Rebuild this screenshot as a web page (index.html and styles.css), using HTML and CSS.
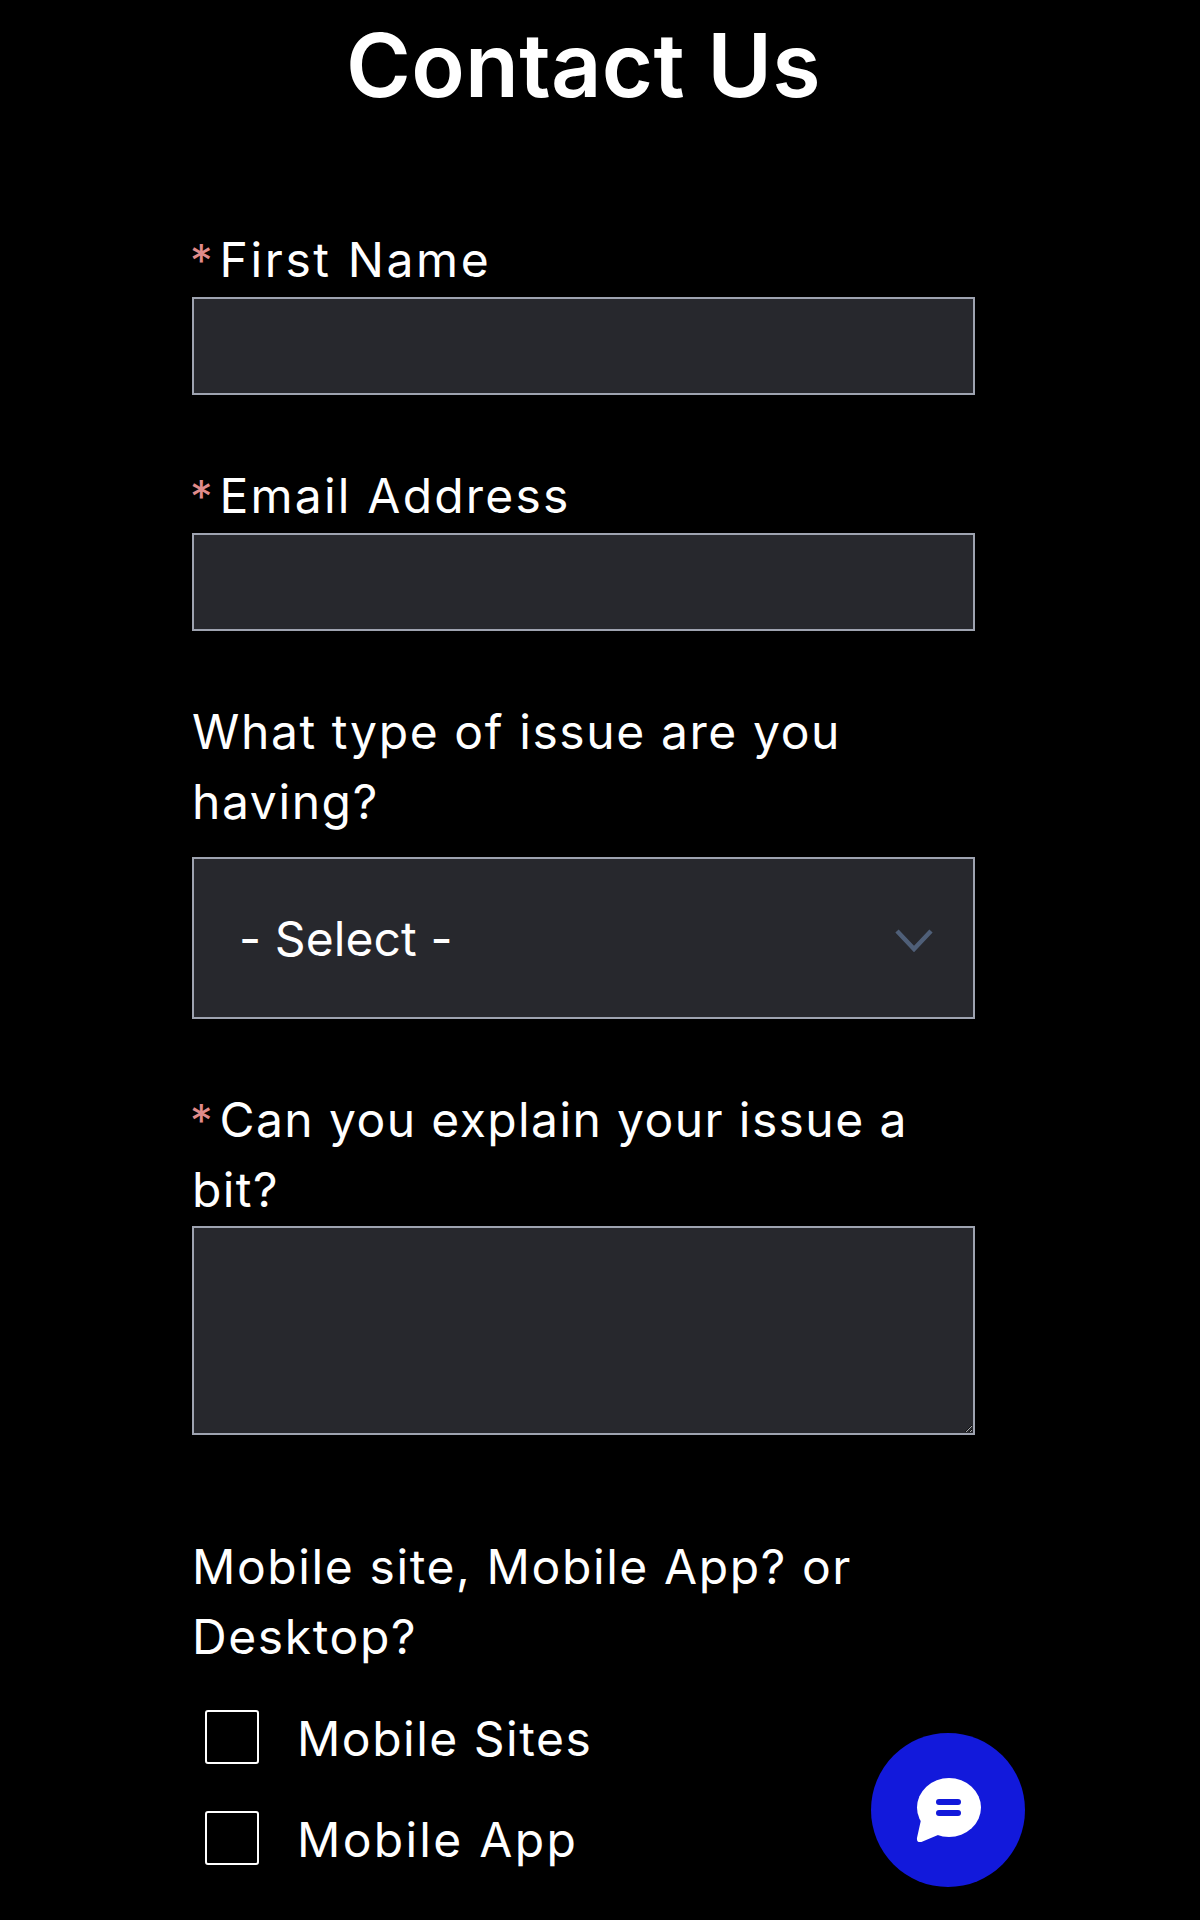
FILE: index.html
```html
<!DOCTYPE html>
<html lang="en">
<head>
<meta charset="utf-8">
<title>Contact Us</title>
<link rel="stylesheet" href="styles.css">
</head>
<body>
<main class="page">
  <h1 class="title">Contact Us</h1>
  <form class="form">
    <div class="field field-first">
      <label class="label label-name" for="fn"><span class="req">*</span>First Name</label>
      <input class="control text-input" id="fn" type="text">
    </div>
    <div class="field">
      <label class="label label-email" for="em"><span class="req">*</span>Email Address</label>
      <input class="control text-input" id="em" type="email">
    </div>
    <div class="field">
      <label class="label label-select" for="ty">What type of issue are you having?</label>
      <div class="select-wrap">
        <select class="control select" id="ty"><option>- Select -</option></select>
        <svg class="chevron" viewBox="0 0 38 24" width="38" height="24" aria-hidden="true"><path d="M2 3 L19 21 L36 3" fill="none" stroke="#4f5f78" stroke-width="4.5"/></svg>
      </div>
    </div>
    <div class="field">
      <label class="label label-explain" for="ex"><span class="req">*</span>Can you explain your issue a bit?</label>
      <textarea class="control area" id="ex"></textarea>
    </div>
    <fieldset class="group">
      <legend class="label legend">Mobile site, Mobile App? or Desktop?</legend>
      <label class="check check-first"><input type="checkbox" class="box"><span class="check-text">Mobile Sites</span></label>
      <label class="check check-app"><input type="checkbox" class="box"><span class="check-text">Mobile App</span></label>
    </fieldset>
  </form>
</main>
<button class="fab" type="button" aria-label="Chat">
  <svg viewBox="0 0 65 64" width="65" height="64" aria-hidden="true">
    <ellipse cx="33" cy="29.5" rx="32" ry="29.5" fill="#fff"/>
    <path d="M6 42 L2 60 Q1.5 64 5 63 L24 55 Z" fill="#fff" stroke="#fff" stroke-width="2" stroke-linejoin="round"/>
    <rect x="20" y="21" width="25" height="6" rx="3" fill="#1219db"/>
    <rect x="20" y="32" width="25" height="6" rx="3" fill="#1219db"/>
  </svg>
</button>
</body>
</html>
```
FILE: styles.css
```css
* { box-sizing: border-box; }
html, body { margin: 0; padding: 0; height: 1920px; overflow: hidden; background: #000; }
body { color: #fff; font-family: Inter, "Liberation Sans", sans-serif; }
.page { width: 783px; margin-left: 192px; }
.title {
  margin: 0 0 0 -30px;
  width: 843px;
  text-align: center;
  font-size: 88px;
  font-weight: 600;
  line-height: 130px;
  letter-spacing: 0.3px;
}
.form { display: flex; flex-direction: column; }
.field { display: flex; flex-direction: column; margin-top: 66px; }
.field-first { margin-top: 95px; }
.label {
  display: block;
  font-size: 48px;
  line-height: 70px;
  font-weight: 400;
  letter-spacing: 1.6px;
  padding: 0;
}
.label-name { letter-spacing: 2.6px; }
.label-email { letter-spacing: 2.2px; }
.label-explain { letter-spacing: 1.4px; }
.label-select { margin-bottom: 20px; }
.req { color: #e08b8b; font-size: 45px; line-height: 0; margin: 0 7px 0 -2px; letter-spacing: 0; }
.control {
  display: block;
  width: 100%;
  border: 2px solid #9ea3b0;
  border-radius: 0;
  background: #27282d;
  color: #fff;
  font: inherit;
  margin: 0;
  outline: none;
}
.text-input { height: 98px; margin-top: 2px; }
.select-wrap { position: relative; }
.select {
  height: 162px;
  padding: 0 45px;
  appearance: none;
  font-size: 48px;
  letter-spacing: 0.1px;
}
.chevron { position: absolute; right: 42px; top: 71px; }
.area { height: 209px; margin-top: 1px; resize: both; min-width: 100%; max-width: 100%; }
.group { border: 0; margin: 97px 0 0; padding: 0; min-width: 0; }
.legend { float: left; width: 100%; margin-bottom: 14px; }
.check {
  clear: both;
  display: flex;
  align-items: center;
  height: 101px;
  padding-left: 13px;
  font-size: 48px;
  letter-spacing: 1.5px;
  gap: 38px;
}
.check-app { letter-spacing: 2.3px; }
.check-text { padding-top: 3px; }
.box {
  appearance: none;
  width: 54px;
  height: 54px;
  flex: none;
  margin: 0;
  border: 2px solid #fff;
  border-radius: 3px;
  background: transparent;
}
.fab {
  position: fixed;
  left: 871px;
  top: 1733px;
  width: 154px;
  height: 154px;
  border: 0;
  border-radius: 50%;
  background: #1219db;
  padding: 0;
  display: flex;
  align-items: center;
  justify-content: center;
}
```
